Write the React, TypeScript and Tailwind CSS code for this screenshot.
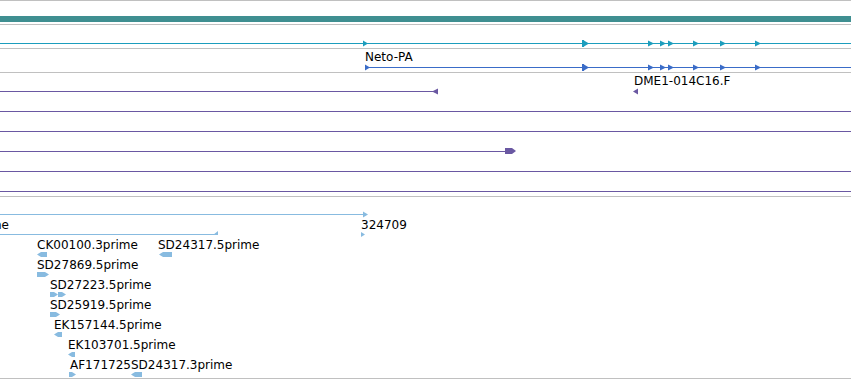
const W = 851;

const cyanStops = [582, 648, 660, 668, 693, 720, 755];

const Arrow = ({ x, y, w = 5, h = 6, dir = "r", fill }: { x: number; y: number; w?: number; h?: number; dir?: "r" | "l"; fill: string }) => {
  const top = y - h / 2;
  const bot = y + h / 2;
  const pts = dir === "r" ? `${x},${top} ${x + w},${y} ${x},${bot}` : `${x + w},${top} ${x},${y} ${x + w},${bot}`;
  return <polygon points={pts} fill={fill} />;
};

// exon-ish block with a pointed end
const Block = ({ x, y, w, h = 5, dir = "r", fill }: { x: number; y: number; w: number; h?: number; dir?: "r" | "l"; fill: string }) => {
  const tip = Math.min(4, w - 1);
  const top = y;
  const bot = y + h;
  const mid = y + h / 2;
  const pts =
    dir === "r"
      ? `${x},${top} ${x + w - tip},${top} ${x + w},${mid} ${x + w - tip},${bot} ${x},${bot}`
      : `${x + w},${top} ${x + tip},${top} ${x},${mid} ${x + tip},${bot} ${x + w},${bot}`;
  return <polygon points={pts} fill={fill} />;
};

const Sep = () => <div className="h-[1px] bg-[#c0c0c0]" />;

const Label = ({ x, y, children }: { x: number; y: number; children: string }) => (
  <span className="absolute whitespace-nowrap text-black" style={{ left: x, top: y }}>
    {children}
  </span>
);

const ests: { label: string; x: number; gx: number; gw: number; dir: "r" | "l"; row: number; double?: boolean }[] = [
  { label: "CK00100.3prime", x: 37, gx: 37, gw: 10, dir: "l", row: 0 },
  { label: "SD24317.5prime", x: 158, gx: 159, gw: 13, dir: "l", row: 0 },
  { label: "SD27869.5prime", x: 37, gx: 37, gw: 12, dir: "r", row: 1 },
  { label: "SD27223.5prime", x: 50, gx: 50, gw: 8, dir: "r", row: 2, double: true },
  { label: "SD25919.5prime", x: 50, gx: 50, gw: 10, dir: "r", row: 3 },
  { label: "EK157144.5prime", x: 54, gx: 54, gw: 8, dir: "l", row: 4 },
  { label: "EK103701.5prime", x: 68, gx: 68, gw: 7, dir: "l", row: 5 },
  { label: "AF171725", x: 70, gx: 69, gw: 7, dir: "r", row: 6 },
  { label: "SD24317.3prime", x: 131, gx: 131, gw: 11, dir: "l", row: 6 },
];

export default function App() {
  const estBlue = "#88bbe0";
  return (
    <div className="w-[851px] h-[380px] overflow-hidden bg-white font-['DejaVu_Sans',sans-serif] text-[12px] leading-[14px]">
      <Sep />
      <div className="h-[15px]" />
      <div className="h-[6px] bg-[#3f8f91]" />
      <div className="h-[2px]" />
      <Sep />

      {/* transcript track, cyan */}
      <div className="relative h-[23px]">
        <svg width={W} height={23} className="absolute left-0 top-0">
          <rect x={0} y={18} width={W} height={1} fill="#1c9dbd" shapeRendering="crispEdges" />
          <Arrow x={363} y={18.5} fill="#1c9dbd" />
          {cyanStops.map((x, i) => (
            <g key={x}>
              {i === 0 && <rect x={582} y={15} width={2} height={7} fill="#1c9dbd" />}
              <Arrow x={i === 0 ? 584 : x} y={18.5} w={i === 0 ? 5 : 6} fill="#1c9dbd" />
            </g>
          ))}
        </svg>
      </div>
      <Sep />

      {/* Neto-PA */}
      <div className="relative h-[23px]">
        <svg width={W} height={23} className="absolute left-0 top-0">
          <rect x={365} y={18} width={W - 365} height={1} fill="#3a6cc8" shapeRendering="crispEdges" />
          <Arrow x={365} y={18.5} fill="#3a6cc8" />
          {cyanStops.map((x, i) => (
            <g key={x}>
              {i === 0 && <rect x={582} y={15} width={2} height={7} fill="#3a6cc8" />}
              <Arrow x={i === 0 ? 584 : x} y={18.5} w={i === 0 ? 5 : 6} fill="#3a6cc8" />
            </g>
          ))}
        </svg>
        <Label x={365} y={1}>Neto-PA</Label>
      </div>
      <Sep />

      {/* purple alignments */}
      <div className="relative h-[123px]">
        <svg width={W} height={123} className="absolute left-0 top-0">
          <rect x={0} y={18} width={433} height={1} fill="#6a58a2" shapeRendering="crispEdges" />
          <Arrow x={432} y={18.5} w={6} dir="l" fill="#6a58a2" />
          <Arrow x={633} y={18.5} w={5} dir="l" fill="#6a58a2" />
          {[38, 58, 98, 118].map((y) => (
            <rect key={y} x={0} y={y} width={W} height={1} fill="#6a58a2" shapeRendering="crispEdges" />
          ))}
          <rect x={0} y={78} width={506} height={1} fill="#6a58a2" shapeRendering="crispEdges" />
          <Block x={505} y={75} w={11} h={6} dir="r" fill="#6a58a2" />
        </svg>
        <Label x={634} y={1}>DME1-014C16.F</Label>
      </div>
      <Sep />

      {/* ESTs */}
      <div className="relative h-[181px]">
        <svg width={W} height={181} className="absolute left-0 top-0">
          <rect x={0} y={17} width={364} height={1} fill={estBlue} shapeRendering="crispEdges" />
          <Arrow x={363} y={17.5} w={5} fill={estBlue} />
          <rect x={0} y={37} width={214} height={1} fill={estBlue} shapeRendering="crispEdges" />
          <polygon points="213,38 218,34 218,38" fill={estBlue} />
          <Arrow x={361} y={37.5} w={4} h={5} fill={estBlue} />
          {ests.map((e) => {
            const gy = 55 + e.row * 20;
            return (
              <g key={e.label}>
                <Block x={e.gx} y={gy} w={e.gw} dir={e.dir} fill={estBlue} />
                {e.double && <Block x={e.gx + 8} y={gy} w={8} dir="r" fill={estBlue} />}
              </g>
            );
          })}
        </svg>
        <Label x={-6} y={21}>ne</Label>
        <Label x={361} y={21}>324709</Label>
        {ests.map((e) => (
          <Label key={e.label + "t"} x={e.x} y={41 + e.row * 20}>
            {e.label}
          </Label>
        ))}
      </div>
      <Sep />
    </div>
  );
}
